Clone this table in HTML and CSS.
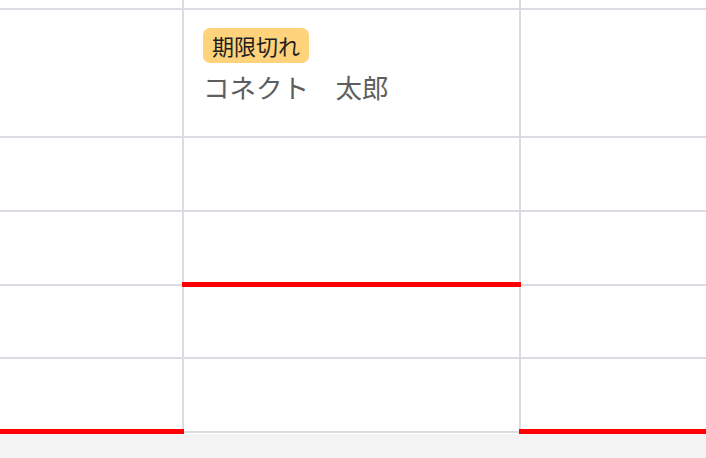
FILE: index.html
```html
<!DOCTYPE html>
<html lang="ja">
<head>
<meta charset="utf-8">
<title>予定表</title>
<link rel="stylesheet" href="styles.css">
</head>
<body>
<div class="sheet">
  <div class="cell"></div>
  <div class="cell"></div>
  <div class="cell"></div>

  <div class="cell"></div>
  <div class="cell entry">
    <span class="badge">期限切れ</span>
    <div class="name">コネクト　太郎</div>
  </div>
  <div class="cell"></div>

  <div class="cell"></div>
  <div class="cell"></div>
  <div class="cell"></div>

  <div class="cell"></div>
  <div class="cell marked"></div>
  <div class="cell"></div>

  <div class="cell"></div>
  <div class="cell"></div>
  <div class="cell"></div>

  <div class="cell marked"></div>
  <div class="cell"></div>
  <div class="cell marked"></div>
</div>
</body>
</html>
```

FILE: styles.css
```css
* {
  box-sizing: border-box;
}

html, body {
  margin: 0;
  padding: 0;
}

html {
  background: #f3f3f3;
}

body {
  font-family: "Noto Sans CJK JP", "Noto Sans", sans-serif;
}

.sheet {
  display: grid;
  grid-template-columns: 184px 337px 1fr;
  grid-template-rows: 10px 128px 74px 74px 73px 74px;
  background: #ffffff;
  padding-bottom: 1px;
}

.cell {
  position: relative;
  border-right: 2px solid #dadce2;
  border-bottom: 2px solid #dadce2;
}

.cell:nth-child(3n) {
  border-right: none;
}

.marked::after {
  content: "";
  position: absolute;
  left: -2px;
  right: -2px;
  bottom: -3px;
  height: 5px;
  background: #ff0000;
  z-index: 1;
}

.cell:nth-child(3n+1).marked::after {
  left: 0;
}

.cell:nth-child(3n).marked::after {
  right: 0;
}

.entry {
  padding: 18px 19px 0;
}

.badge {
  display: inline-block;
  background: #ffd27c;
  color: #1e1e1e;
  font-size: 22px;
  line-height: 27px;
  padding: 4px 9px;
  border-radius: 7px;
}

.name {
  margin-top: 8px;
  color: #5e5e5e;
  font-size: 26.5px;
  line-height: 32px;
}
```
